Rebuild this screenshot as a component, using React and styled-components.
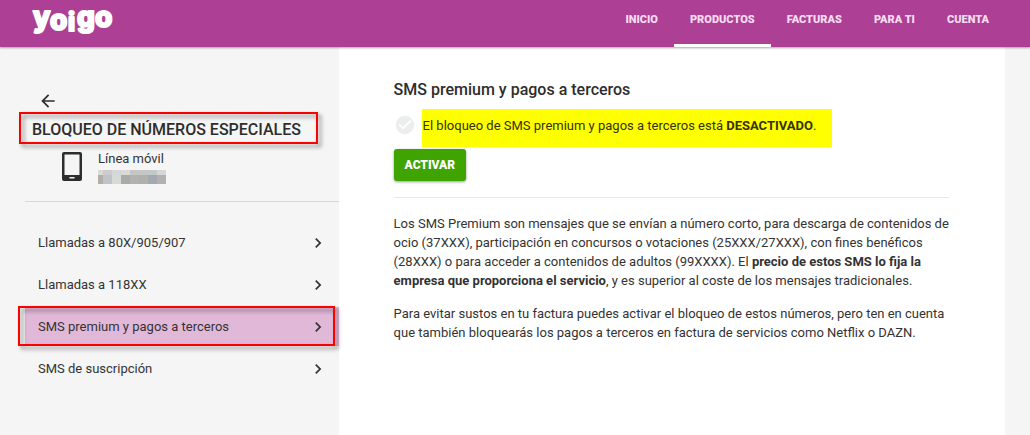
import styled, { createGlobalStyle } from "styled-components"
import { MdArrowBack, MdCheckCircle, MdChevronRight } from "react-icons/md"

const menu = ["INICIO", "PRODUCTOS", "FACTURAS", "PARA TI", "CUENTA"];

const options = [
    "Llamadas a 80X/905/907",
    "Llamadas a 118XX",
    "SMS premium y pagos a terceros",
    "SMS de suscripción",
];

// hidden phone number, two rows of blocks
const blocks = [
    { x: 0, w: 5, top: "#dcd8d4", bottom: "#b5aea8" },
    { x: 5, w: 9, top: "#cccccc", bottom: "#c0c3c9" },
    { x: 14, w: 9, top: "#d2d8d8", bottom: "#d6dad9" },
    { x: 23, w: 9, top: "#dbd9d5", bottom: "#aaaaa7" },
    { x: 32, w: 9, top: "#c6c6c6", bottom: "#b2b2b0" },
    { x: 41, w: 9, top: "#c6c6c5", bottom: "#b1b1ac" },
    { x: 50, w: 9, top: "#c3c9ca", bottom: "#a4a8b0" },
    { x: 59, w: 9, top: "#d6d6d6", bottom: "#b1b1b1" },
];

function Logo() {
    return (
        <svg width="88" height="38" viewBox="0 0 88 38" role="img" aria-label="yoigo">
            <LogoText x="3 20 38 47 65" y="23 26 27 23 23">
                yo<tspan fontSize="25" strokeWidth="2">i</tspan>go
            </LogoText>
        </svg>
    )
}

function PhoneIcon() {
    return (
        <svg width="20" height="29" viewBox="0 0 20 29" aria-hidden="true">
            <path
                fill="#2d2d2d"
                fillRule="evenodd"
                d="M2 0h16a2 2 0 0 1 2 2v25a2 2 0 0 1-2 2H2a2 2 0 0 1-2-2V2a2 2 0 0 1 2-2zM2.500 2.500v20.500h15V2.500zM7.500 25v1.500h5V25z"
            />
        </svg>
    )
}

function HiddenNumber() {
    return (
        <svg width="68" height="14" viewBox="0 0 68 14" aria-hidden="true" shapeRendering="crispEdges">
            {blocks.map(b => (
                <g key={b.x}>
                    <rect x={b.x} y="0" width={b.w} height="5" fill={b.top} />
                    <rect x={b.x} y="5" width={b.w} height="9" fill={b.bottom} />
                </g>
            ))}
        </svg>
    )
}

export default function App() {
    return (
        <>
            <GlobalStyle />
            <Header>
                <HeaderContent>
                    <LogoLink href="#"><Logo /></LogoLink>
                    <Nav>
                        {menu.map(item => (
                            <NavLink key={item} href="#" $active={item === "PRODUCTOS"}>{item}</NavLink>
                        ))}
                    </Nav>
                </HeaderContent>
            </Header>
            <Page>
                <Sidebar>
                    <BackButton type="button" aria-label="Volver"><MdArrowBack size={20} /></BackButton>
                    <SidebarTitle>
                        BLOQUEO DE NÚMEROS ESPECIALES
                        <TitleMark />
                    </SidebarTitle>
                    <Line>
                        <PhoneIcon />
                        <LineInfo>
                            <p>Línea móvil</p>
                            <HiddenNumber />
                        </LineInfo>
                    </Line>
                    <Options>
                        {options.map(option => {
                            const active = option === "SMS premium y pagos a terceros";
                            return (
                                <Option key={option} href="#" $active={active}>
                                    {option}
                                    <MdChevronRight size={20} stroke="currentColor" />
                                    {active && <OptionMark />}
                                </Option>
                            )
                        })}
                    </Options>
                </Sidebar>
                <Main>
                    <Title>SMS premium y pagos a terceros</Title>
                    <Status>
                        <MdCheckCircle size={22} />
                        <StatusText>
                            El bloqueo de SMS premium y pagos a terceros está <b>DESACTIVADO</b>.
                        </StatusText>
                    </Status>
                    <ActivateButton type="button">ACTIVAR</ActivateButton>
                    <Divider />
                    <Text>
                        Los SMS Premium son mensajes que se envían a número corto, para descarga de contenidos de
                        ocio (37XXX), participación en concursos o votaciones (25XXX/27XXX), con fines benéficos
                        (28XXX) o para acceder a contenidos de adultos (99XXXX). El <b>precio de estos SMS lo fija la
                        empresa que proporciona el servicio</b>, y es superior al coste de los mensajes tradicionales.
                    </Text>
                    <Text>
                        Para evitar sustos en tu factura puedes activar el bloqueo de estos números, pero ten en cuenta
                        que también bloquearás los pagos a terceros en factura de servicios como Netflix o DAZN.
                    </Text>
                </Main>
            </Page>
        </>
    )
}

const GlobalStyle = createGlobalStyle`
    * {
        box-sizing: border-box;
    }
    body {
        margin: 0;
        background-color: #F5F5F5;
        color: #333333;
        font-family: Roboto, "Liberation Sans", sans-serif;
        font-size: 13px;
        line-height: 20px;
    }
    h1, h2, p {
        margin: 0;
    }
    a {
        color: inherit;
        text-decoration: none;
    }
    svg {
        display: block;
        flex-shrink: 0;
        overflow: visible;
    }
    #root {
        min-height: 100vh;
        display: flex;
        flex-direction: column;
    }
`;

const Header = styled.header`
    position: relative;
    background-color: #AD3F95;
    box-shadow: 0 1px 2px rgba(0, 0, 0, 0.35);
`;

const HeaderContent = styled.div`
    max-width: 980px;
    height: 47px;
    margin: 0 auto;
    display: flex;
    justify-content: space-between;
`;

const LogoLink = styled.a`
    padding: 4px 5px;
`;

const LogoText = styled.text`
    font-family: Inter, sans-serif;
    font-size: 28px;
    font-weight: 800;
    fill: #FFFFFF;
    stroke: #FFFFFF;
    stroke-width: 2px;
    stroke-linejoin: round;
`;

const Nav = styled.nav`
    display: flex;
`;

const NavLink = styled.a`
    padding: 10px 16px 0;
    border-bottom: 3px solid ${props => props.$active ? "#FFFFFF" : "transparent"};
    color: #F7DCF1;
    font-size: 11px;
    font-weight: 900;
`;

const Page = styled.div`
    width: 100%;
    max-width: 980px;
    margin: 0 auto;
    flex: 1;
    display: flex;
`;

const Sidebar = styled.aside`
    width: 32%;
    flex-shrink: 0;
    padding-top: 44px;
`;

const BackButton = styled.button`
    display: block;
    margin-left: 13px;
    padding: 0;
    border: 0;
    background: none;
    color: #2D2D2D;
    cursor: pointer;
`;

const Mark = styled.span`
    position: absolute;
    border: 2px solid #FF0000;
    filter: drop-shadow(3px 3px 2px rgba(0, 0, 0, 0.45));
    pointer-events: none;
`;

const TitleMark = styled(Mark)`
    inset: -4px 21px 0 -6px;
`;

const OptionMark = styled(Mark)`
    inset: -1px 4px 0 -7px;
`;

const SidebarTitle = styled.h1`
    position: relative;
    margin-top: 5px;
    padding: 4px 0 4px 7px;
    color: #2D2D2D;
    font-size: 16px;
    font-weight: 500;
    white-space: nowrap;
`;

const Line = styled.div`
    display: flex;
    align-items: center;
    gap: 16px;
    padding: 5px 0 17px 37px;
    border-bottom: 1px solid #D8D8D8;
`;

const LineInfo = styled.div`
    display: flex;
    flex-direction: column;
    gap: 1px;
`;

const Options = styled.nav`
    display: flex;
    flex-direction: column;
    gap: 3px;
    margin-top: 21px;
`;

const Option = styled.a`
    position: relative;
    display: flex;
    align-items: center;
    justify-content: space-between;
    height: 39px;
    padding: 0 11px 0 13px;
    background-color: ${props => props.$active ? "#E2B8D8" : "transparent"};
`;

const Main = styled.main`
    flex: 1;
    padding: 33px 56px 32px 55px;
    background-color: #FFFFFF;
`;

const Title = styled.h2`
    color: #2D2D2D;
    font-size: 16px;
    font-weight: 500;
`;

const Status = styled.div`
    display: flex;
    gap: 6px;
    margin-top: 9px;
    color: #ECEEEE;
    > svg {
        margin-top: 5px;
    }
`;

const StatusText = styled.p`
    padding: 7px 16px 11px 1px;
    background-color: #FFFF00;
    color: #333300;
`;

const ActivateButton = styled.button`
    display: block;
    margin-top: 2px;
    height: 32px;
    padding: 0 11px;
    border: 0;
    border-radius: 3px;
    background-color: #3FA300;
    box-shadow: 0 1px 3px rgba(0, 0, 0, 0.4);
    color: #FFFFFF;
    font-family: inherit;
    font-size: 12px;
    font-weight: 900;
    cursor: pointer;
`;

const Divider = styled.hr`
    margin: 16px 0;
    border: 0;
    border-top: 1px solid #E8E8E8;
`;

const Text = styled.p`
    margin-bottom: 14px;
    line-height: 19px;
`;
